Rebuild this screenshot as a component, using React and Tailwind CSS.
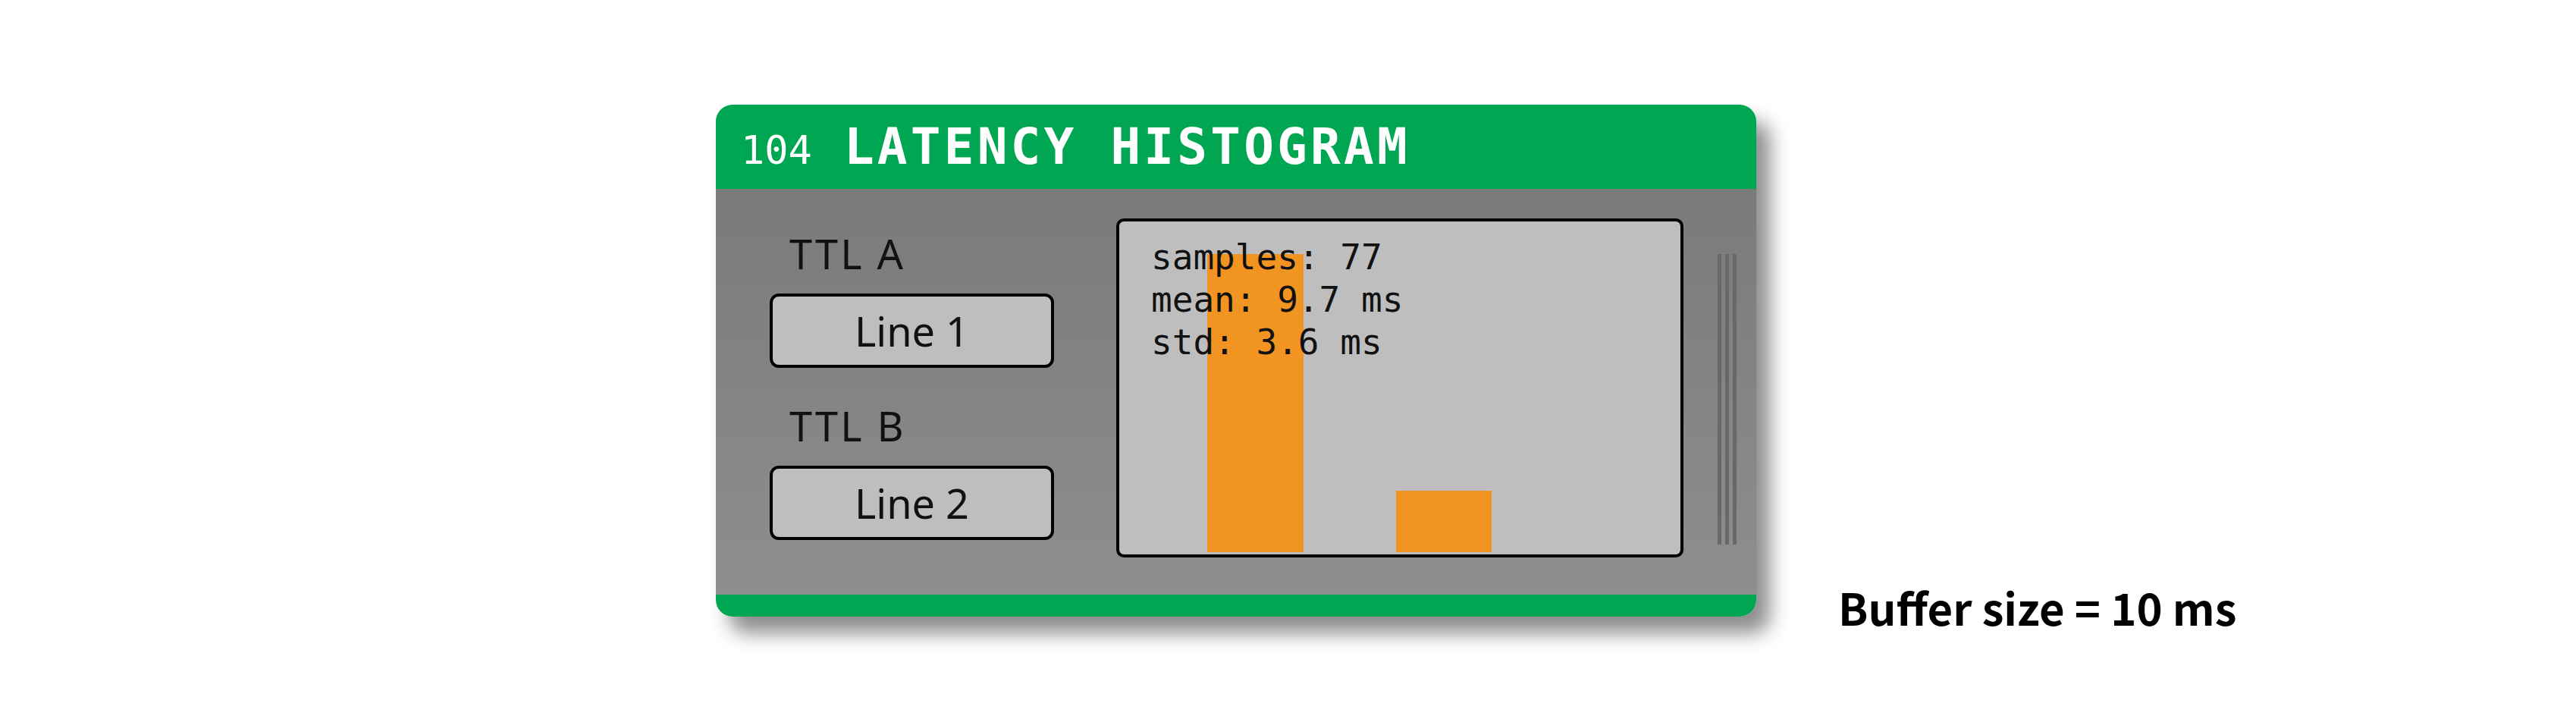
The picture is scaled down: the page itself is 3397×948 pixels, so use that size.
import React from 'react';

const stats = [
  { label: 'samples', value: '77' },
  { label: 'mean', value: '9.7 ms' },
  { label: 'std', value: '3.6 ms' },
];

// bins in px inside the plot area (740 x 439)
const bins = [
  { x: 116, w: 127, h: 393 },
  { x: 365, w: 126, h: 81 },
];

function LineSelect({ label, value, className = '' }) {
  return (
    <div className={`flex flex-col ${className}`}>
      <span
        className="pl-[26px] text-[54px] leading-[54px] tracking-[3px] text-[#111]"
        style={{ fontFamily: '"Noto Sans", sans-serif' }}
      >
        {label}
      </span>
      <button
        className="mt-[26px] h-[98px] w-[375px] rounded-[12px] border-[4px] border-black bg-[#bebebe] text-[54px] leading-none text-[#111]"
        style={{ fontFamily: '"Noto Sans", sans-serif' }}
      >
        {value}
      </button>
    </div>
  );
}

function Histogram() {
  return (
    <div className="relative h-[447px] w-[748px] rounded-[10px] border-[4px] border-black bg-[#bebebe]">
      <svg className="absolute inset-0 h-full w-full" viewBox="0 0 740 439" preserveAspectRatio="none">
        {bins.map((b, i) => (
          <rect key={i} x={b.x} y={436 - b.h} width={b.w} height={b.h} fill="#f29421" />
        ))}
      </svg>
      <div
        className="relative pl-[42px] pt-[19px] text-[46px] leading-[56px] text-[#111]"
        style={{ fontFamily: '"DejaVu Sans Mono", monospace' }}
      >
        {stats.map((s) => (
          <div key={s.label} className="whitespace-pre">
            {s.label}: {s.value}
          </div>
        ))}
      </div>
    </div>
  );
}

export default function App() {
  return (
    <div className="flex h-[948px] w-full bg-white pl-[944px] pt-[138px]">
      <div className="flex h-[675px] w-[1372px] flex-col overflow-hidden rounded-[22px] shadow-[18px_22px_26px_rgba(0,0,0,0.45)]">
        {/* Header */}
        <div className="flex h-[111px] items-center bg-[#00a651] pl-[33px] text-white">
          <div className="flex items-baseline">
            <span
              className="text-[52px] leading-none"
              style={{ fontFamily: '"DejaVu Sans Mono", monospace' }}
            >
              104
            </span>
            <span
              className="ml-[42px] text-[66px] font-bold leading-none tracking-[4.2px]"
              style={{ fontFamily: '"DejaVu Sans Mono", monospace' }}
            >
              LATENCY HISTOGRAM
            </span>
          </div>
        </div>

        {/* Body */}
        <div className="flex h-[535px] items-start bg-gradient-to-b from-[#7a7a7a] to-[#8e8e8e] pl-[71px] pt-[39px]">
          <div className="mt-[19px] flex w-[375px] flex-col">
            <LineSelect label="TTL A" value="Line 1" />
            <LineSelect label="TTL B" value="Line 2" className="mt-[49px]" />
          </div>
          <div className="ml-[82px]">
            <Histogram />
          </div>
          <div className="ml-[45px] mt-[47px] flex h-[383px] gap-[5px]">
            <div className="w-[5px] bg-[#686868]" />
            <div className="w-[5px] bg-[#686868]" />
            <div className="w-[5px] bg-[#686868]" />
          </div>
        </div>

        {/* Footer */}
        <div className="h-[29px] bg-[#00a651]" />
      </div>

      <div
        className="ml-[108px] mt-[622px] self-start text-[58px] font-semibold leading-[80px] text-black"
        style={{ fontFamily: '"Noto Sans CJK SC", "Noto Sans", sans-serif' }}
      >
        Buffer size = 10 ms
      </div>
    </div>
  );
}
